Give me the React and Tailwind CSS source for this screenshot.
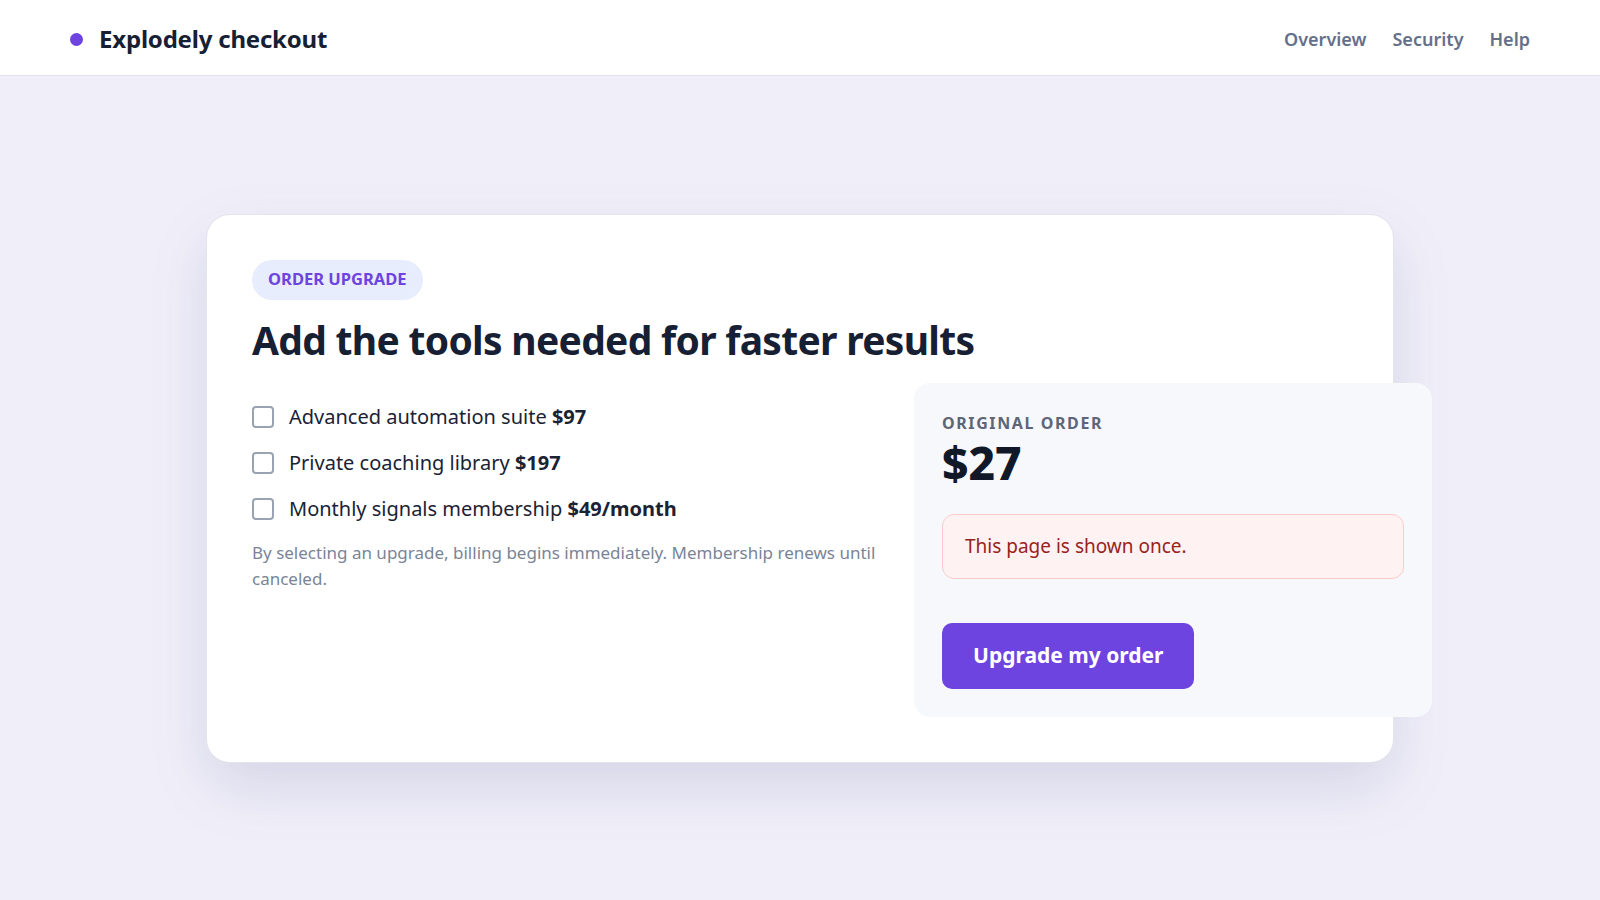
import React from "react";

const items = [
  { label: "Advanced automation suite", price: "$97" },
  { label: "Private coaching library", price: "$197" },
  { label: "Monthly signals membership", price: "$49/month" },
];

export default function App() {
  return (
    <div className="min-h-screen bg-[#f0eff9] text-[#172033] font-['Noto_Sans',sans-serif]">
      <header className="h-[76px] pt-[3px] bg-white border-b border-[#e2e2ec] flex items-center justify-between px-[70px]">
        <div className="flex items-center gap-[16px]">
          <span className="w-[13px] h-[13px] rounded-full bg-[#6d44e0]" />
          <span className="text-[24px] font-bold text-[#172033] tracking-[-0.2px]">Explodely checkout</span>
        </div>
        <nav className="flex items-center gap-[26px] text-[18px] font-semibold text-[#64708a]">
          <a>Overview</a>
          <a>Security</a>
          <a>Help</a>
        </nav>
      </header>
      <main className="h-[824px] flex items-center justify-center">
        <div className="w-[1188px] bg-white rounded-[24px] border border-[#e4e4ee] shadow-[0_24px_60px_rgba(60,60,120,0.14)] p-[45px]">
          <span className="inline-flex items-center h-[40px] px-[16px] rounded-full bg-[#e8edfd] text-[#6d44e0] text-[16.5px] font-bold">
            ORDER UPGRADE
          </span>
          <h1 className="mt-[14px] text-[39px] leading-[52px] font-bold tracking-[-0.7px] text-[#172033]">
            Add the tools needed for faster results
          </h1>
          <div className="mt-[17px] grid grid-cols-[630px_518px] gap-[32px]">
            <div className="pt-[19px]">
              <div className="flex flex-col gap-[16px]">
                {items.map((it) => (
                  <label key={it.label} className="flex items-center gap-[15px] h-[30px] text-[20px] text-[#1a2234]">
                    <span className="w-[22px] h-[22px] rounded-[4px] border-2 border-[#9aa3b3] bg-white" />
                    <span>
                      {it.label} <b className="font-bold">{it.price}</b>
                    </span>
                  </label>
                ))}
              </div>
              <p className="mt-[16px] text-[17px] leading-[26px] text-[#7a8497]">
                By selecting an upgrade, billing begins immediately. Membership renews until canceled.
              </p>
            </div>
            <div className="bg-[#f7f8fc] rounded-[16px] p-[28px]">
              <div className="text-[16px] font-bold tracking-[1.6px] text-[#5d6677]">ORIGINAL ORDER</div>
              <div className="text-[46px] leading-[54px] font-extrabold text-[#111827]">$27</div>
              <div className="mt-[25px] h-[65px] flex items-center px-[22px] rounded-[12px] border border-[#fecaca] bg-[#fef2f2] text-[19px] text-[#99221b]">
                This page is shown once.
              </div>
              <button className="mt-[44px] h-[66px] px-[31px] rounded-[10px] bg-[#6d44e0] text-white text-[21px] font-bold">
                Upgrade my order
              </button>
            </div>
          </div>
        </div>
      </main>
    </div>
  );
}
